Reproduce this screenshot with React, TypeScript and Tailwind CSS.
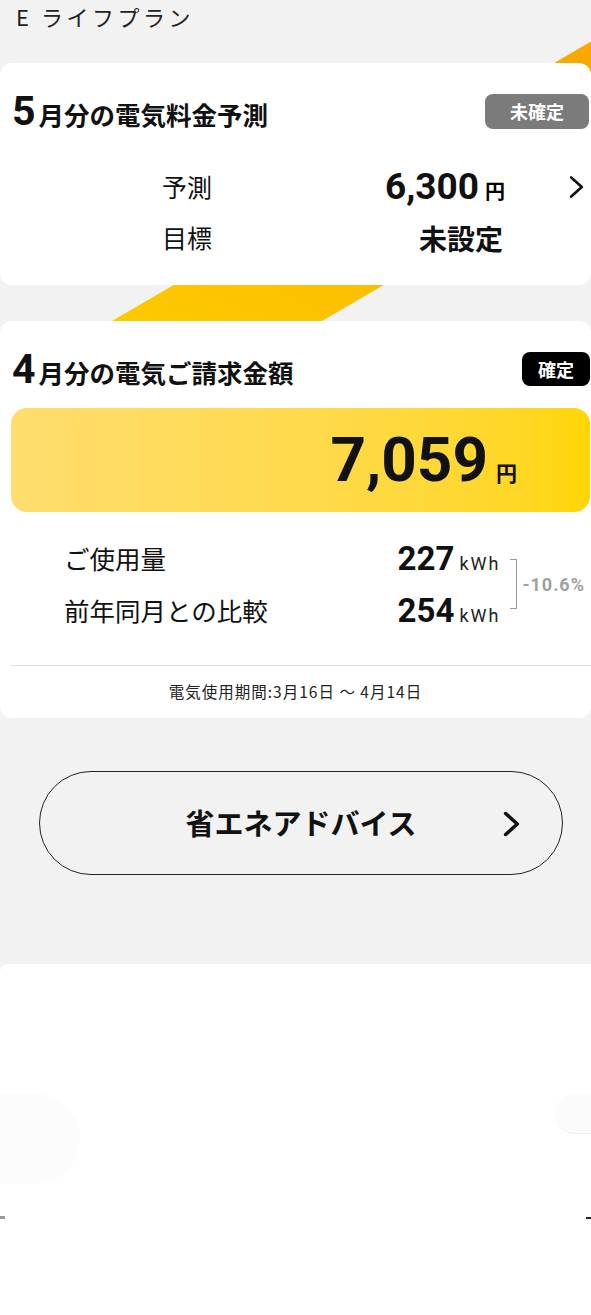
import React from 'react';

const jp = "font-['Noto_Sans_CJK_JP',sans-serif]";
const num = "font-['Roboto','Noto_Sans_CJK_JP',sans-serif]";

const Chevron: React.FC<{ className?: string; stroke?: number }> = ({ className, stroke = 2.5 }) => (
    <svg viewBox="0 0 16 24" className={className} fill="none">
        <polyline points="3,3 13,12 3,21" stroke="#111" strokeWidth={stroke} strokeLinecap="round" strokeLinejoin="round" />
    </svg>
);

const Band: React.FC = () => (
    <svg className="absolute left-0 top-0 h-[330px] w-[591px]" viewBox="0 0 591 330" preserveAspectRatio="none">
        <defs>
            <linearGradient id="band" x1="0" y1="1" x2="1" y2="0">
                <stop offset="0" stopColor="#fdca00" />
                <stop offset="0.45" stopColor="#fbb500" />
                <stop offset="1" stopColor="#f59c00" />
            </linearGradient>
        </defs>
        <polygon points="662,0 872,0 322,321 112,321" fill="url(#band)" />
    </svg>
);

const ForecastCard: React.FC = () => (
    <section className="relative z-10 rounded-[12px] bg-white pt-[31px] pb-[22px]">
        <div className="flex h-[35px] items-center justify-between pl-[12px] pr-[2px]">
            <h2 className="flex items-baseline font-bold text-[#111]">
                <span className={`${num} text-[41px] leading-none`}>5</span>
                <span className="ml-[3px] text-[25.5px] leading-none">月分の電気料金予測</span>
            </h2>
            <span className="flex h-[35px] items-center rounded-[8px] bg-[#7b7b7b] px-[25px] text-[18px] font-bold text-white">未確定</span>
        </div>
        <div className="mt-[32px]">
            <div className="flex h-[51px] items-center pl-[162px]">
                <span className="text-[25px] text-[#111]">予測</span>
                <span className="flex flex-1 items-baseline justify-end">
                    <span className={`${num} text-[37px] font-bold leading-none text-[#111]`}>6,300</span>
                    <span className="ml-[6px] text-[20px] font-bold leading-none">円</span>
                </span>
                <span className="flex w-[86px] justify-end pr-[6px]">
                    <Chevron className="h-[26px] w-[17px]" />
                </span>
            </div>
            <div className="flex h-[51px] items-center pl-[162px]">
                <span className="text-[25px] text-[#111]">目標</span>
                <span className="flex flex-1 justify-end pr-[2px] text-[28px] font-bold text-[#111]">未設定</span>
                <span className="w-[86px]" />
            </div>
        </div>
    </section>
);

const UsageRow: React.FC<{ label: string; value: string }> = ({ label, value }) => (
    <div className="flex h-[52px] items-center justify-between">
        <span className="text-[25.5px] text-[#111]">{label}</span>
        <span className="flex items-baseline">
            <span className={`${num} text-[33px] font-bold leading-none text-[#111]`}>{value}</span>
            <span className={`${num} ml-[5px] text-[18px] font-normal leading-none tracking-[2px] text-[#222]`}>kWh</span>
        </span>
    </div>
);

const BillCard: React.FC = () => (
    <section className="relative z-10 mt-[36px] rounded-[12px] bg-white pt-[31px]">
        <div className="flex h-[34px] items-center justify-between pl-[12px] pr-[1px]">
            <h2 className="flex items-baseline font-bold text-[#111]">
                <span className={`${num} text-[41px] leading-none`}>4</span>
                <span className="ml-[3px] text-[25.5px] leading-none">月分の電気ご請求金額</span>
            </h2>
            <span className="flex h-[34px] items-center rounded-[8px] bg-black px-[16px] text-[18px] font-bold text-white">確定</span>
        </div>
        <div className="ml-[11px] mr-[1px] mt-[22px] flex h-[104px] items-center justify-end rounded-[16px] bg-gradient-to-r from-[#ffdd6e] to-[#ffd600] pr-[73px]">
            <span className="flex items-baseline">
                <span className={`${num} text-[62px] font-bold leading-none text-[#111]`}>7,059</span>
                <span className="ml-[8px] text-[21px] font-bold leading-none text-[#111]">円</span>
            </span>
        </div>
        <div className="mt-[20px] flex items-center pl-[64px] pr-[6px]">
            <div className="flex-1 pr-[10px]">
                <UsageRow label="ご使用量" value="227" />
                <UsageRow label="前年同月との比較" value="254" />
            </div>
            <div className="h-[50px] w-[7px] border-y border-r border-[#9a9a9a]" />
            <span className={`${num} ml-[5px] text-[18px] font-bold tracking-[1px] text-[#a0a0a0]`}>-10.6%</span>
        </div>
        <div className="ml-[11px] mt-[29px] border-t border-[#dedede]" />
        <p className="flex h-[52px] items-center justify-center text-[15.5px] tracking-[1px] text-[#222]">電気使用期間:3月16日 〜 4月14日</p>
    </section>
);

const App: React.FC = () => {
    return (
        <div className={`${jp} relative min-h-[1315px] w-full overflow-hidden bg-[#f2f2f2]`}>
            <Band />
            <header className="relative z-10 h-[63px] pl-[16px]">
                <h1 className="text-[22px] leading-[32px] tracking-[3.5px] text-[#222]">E ライフプラン</h1>
            </header>
            <ForecastCard />
            <BillCard />
            <button type="button" className="relative mb-[89px] ml-[39px] mr-[28px] mt-[53px] flex h-[104px] w-[524px] items-center justify-center rounded-full border border-[#222] text-[29px] font-bold text-[#111]">
                省エネアドバイス
                <Chevron className="absolute right-[41px] top-[38px] h-[28px] w-[19px]" stroke={3} />
            </button>
            <section className="relative h-[351px] rounded-tl-[8px] bg-white">
                <div className="absolute left-0 top-[130px] h-[90px] w-[80px] rounded-r-full bg-[#fcfcfc]" />
                <div className="absolute right-0 top-[130px] h-[40px] w-[36px] rounded-l-[20px] border-b border-[#eeeeee] bg-[#fbfbfb]" />
                <div className="absolute left-0 top-[252px] h-[3px] w-[5px] bg-[#999]" />
                <div className="absolute right-0 top-[253px] h-[2px] w-[5px] bg-[#222]" />
            </section>
        </div>
    );
};

export default App;
